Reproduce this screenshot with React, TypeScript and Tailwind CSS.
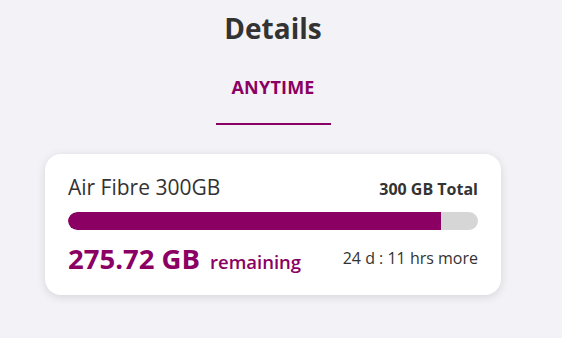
import React from "react";

export default function App() {
  // usage data
  const plan = {
    name: "Air Fibre 300GB",
    total: 300,
    remaining: 275.72,
    validity: "24 d : 11 hrs more",
  };

  const pct = 91;

  return (
    <div className="min-h-screen bg-[#f3f3f7] font-['Open_Sans',sans-serif] text-[#333333]">
      <div className="w-[546px] flex flex-col items-center pt-[9px]">
        <h1 className="text-[28px] font-bold leading-[38px]">Details</h1>

        <div className="mt-[28px] px-[16px] pb-[23px] border-b-2 border-[#8a0063] w-[115px] text-center">
          <span className="text-[18px] font-bold leading-[24px] text-[#8a0063] tracking-[0.2px]">
            ANYTIME
          </span>
        </div>

        <div className="mt-[29px] w-[456px] bg-white rounded-2xl shadow-[0_2px_10px_rgba(0,0,0,0.12)] px-[23px] pt-[19px] pb-[19px]">
          <div className="flex items-baseline justify-between">
            <span className="text-[21px] leading-[28px]">{plan.name}</span>
            <span className="text-[16px] font-bold leading-[20px]">
              {plan.total} GB Total
            </span>
          </div>

          <div className="mt-[11px] h-[18px] w-full rounded-full bg-[#d6d6d6] overflow-hidden">
            <div
              className="h-full bg-[#8a0063] rounded-l-full"
              style={{ width: `${pct}%` }}
            />
          </div>

          <div className="mt-[12px] flex items-end justify-between">
            <div className="flex items-baseline gap-[10px] text-[#8a0063]">
              <span className="text-[27.5px] font-bold leading-[34px]">
                {plan.remaining} GB
              </span>
              <span className="text-[18.5px] font-semibold leading-[24px]">
                remaining
              </span>
            </div>
            <span className="text-[16px] leading-[20px] mb-[8px]">
              {plan.validity}
            </span>
          </div>
        </div>
      </div>
    </div>
  );
}
